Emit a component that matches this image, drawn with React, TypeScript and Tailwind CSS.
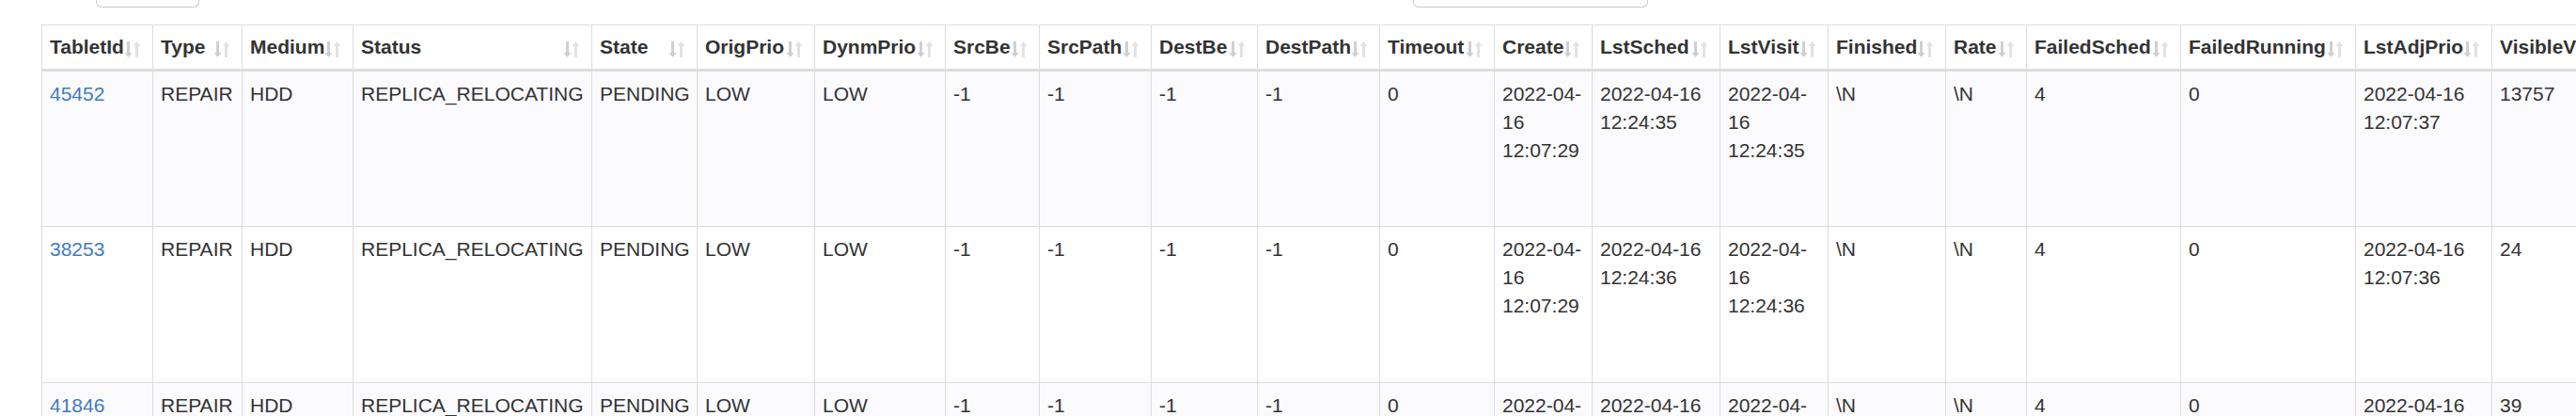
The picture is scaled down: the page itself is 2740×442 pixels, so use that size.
import React from "react";

const columns = [
  { name: "TabletId", width: 118 },
  { name: "Type", width: 95 },
  { name: "Medium", width: 118 },
  { name: "Status", width: 254 },
  { name: "State", width: 112 },
  { name: "OrigPrio", width: 125 },
  { name: "DynmPrio", width: 139 },
  { name: "SrcBe", width: 100 },
  { name: "SrcPath", width: 119 },
  { name: "DestBe", width: 113 },
  { name: "DestPath", width: 130 },
  { name: "Timeout", width: 122 },
  { name: "Create", width: 104 },
  { name: "LstSched", width: 136 },
  { name: "LstVisit", width: 115 },
  { name: "Finished", width: 125 },
  { name: "Rate", width: 86 },
  { name: "FailedSched", width: 164 },
  { name: "FailedRunning", width: 186 },
  { name: "LstAdjPrio", width: 145 },
  { name: "VisibleVersion", width: 180 },
];

const rows = [
  ["45452", "REPAIR", "HDD", "REPLICA_RELOCATING", "PENDING", "LOW", "LOW", "-1", "-1", "-1", "-1", "0", "2022-04-16 12:07:29", "2022-04-16 12:24:35", "2022-04-16 12:24:35", "\\N", "\\N", "4", "0", "2022-04-16 12:07:37", "13757"],
  ["38253", "REPAIR", "HDD", "REPLICA_RELOCATING", "PENDING", "LOW", "LOW", "-1", "-1", "-1", "-1", "0", "2022-04-16 12:07:29", "2022-04-16 12:24:36", "2022-04-16 12:24:36", "\\N", "\\N", "4", "0", "2022-04-16 12:07:36", "24"],
  ["41846", "REPAIR", "HDD", "REPLICA_RELOCATING", "PENDING", "LOW", "LOW", "-1", "-1", "-1", "-1", "0", "2022-04-16 12:07:29", "2022-04-16 12:24:36", "2022-04-16 12:24:36", "\\N", "\\N", "4", "0", "2022-04-16 12:07:36", "39"],
];

function SortIcon() {
  return (
    <svg width="18" height="19" viewBox="0 0 18 19" className="absolute bottom-[11px] right-3">
      <path d="M3 1h3v12h2.5L4.5 18 0.5 13H3z" fill="#cfcfcf" />
      <path d="M12 18h3V6h2.5L13.5 1 9.5 6H12z" fill="#e2e2e2" />
    </svg>
  );
}

export default function App() {
  return (
    <div className="h-[442px] w-[2740px] overflow-hidden bg-white font-['Liberation_Sans',Arial,sans-serif] text-[21px] leading-[30px] text-[#333]">
      <div className="flex h-[8px]">
        <div className="ml-[102px] h-[8px] w-[110px] rounded-b-[6px] border border-t-0 border-[#ccc]" />
        <div className="ml-[1291px] h-[8px] w-[250px] rounded-b-[6px] border border-t-0 border-[#ccc]" />
      </div>

      <div className="pl-[44px] pt-[18px]">
        <table className="w-[2786px] table-fixed border-collapse border border-[#ddd]">
          <colgroup>
            {columns.map((col) => (
              <col key={col.name} style={{ width: col.width }} />
            ))}
          </colgroup>
          <thead>
            <tr>
              {columns.map((col) => (
                <th
                  key={col.name}
                  className="relative h-[47px] overflow-hidden whitespace-nowrap border border-b-[3px] border-[#ddd] px-2 py-2 pr-[30px] text-left align-bottom font-bold"
                >
                  {col.name}
                  <SortIcon />
                </th>
              ))}
            </tr>
          </thead>
          <tbody>
            {rows.map((row, i) => (
              <tr key={row[0]} className={i % 2 === 0 ? "bg-[#fbfafd]" : "bg-white"}>
                {row.map((cell, j) => (
                  <td
                    key={j}
                    className="h-[166px] border border-[#ddd] px-2 pb-2 pt-[9px] align-top"
                  >
                    {j === 0 ? (
                      <a href="#" className="text-[#3f7cbf]">
                        {cell}
                      </a>
                    ) : (
                      cell
                    )}
                  </td>
                ))}
              </tr>
            ))}
          </tbody>
        </table>
      </div>
    </div>
  );
}
